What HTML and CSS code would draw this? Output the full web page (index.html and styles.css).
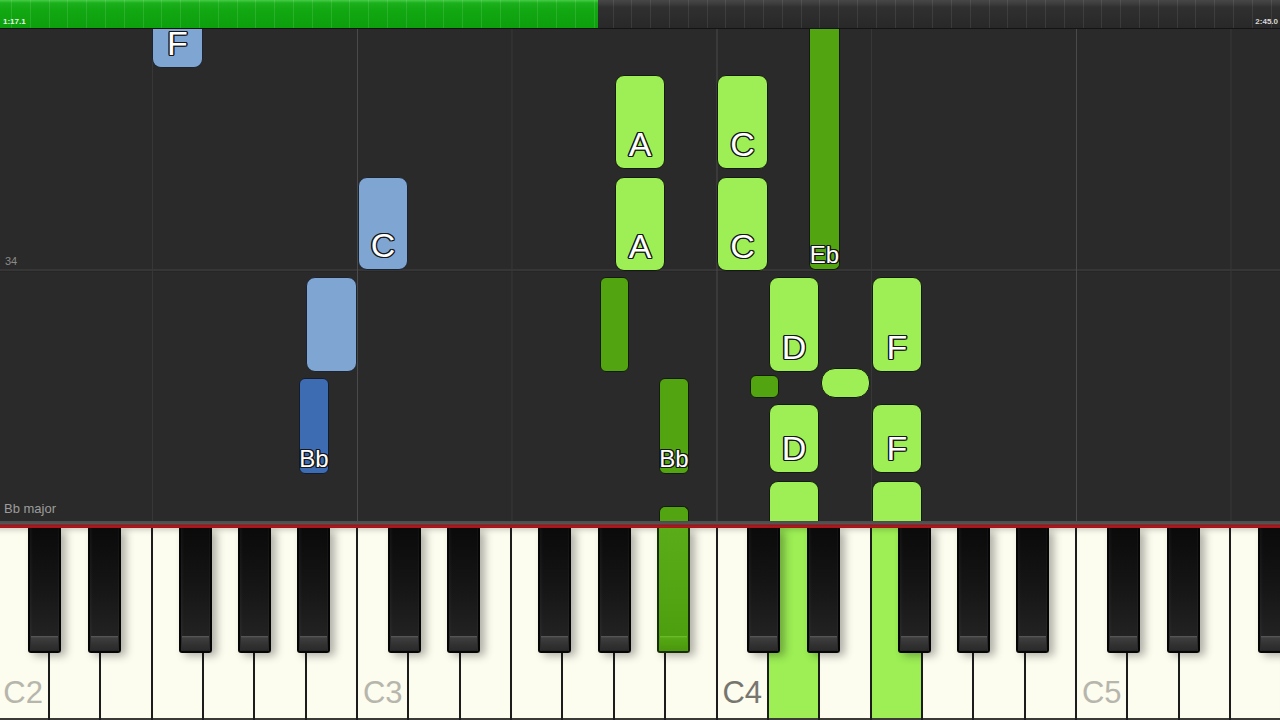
FILE: index.html
```html
<!DOCTYPE html>
<html>
<head>
<meta charset="utf-8">
<title>Piano roll</title>
<link rel="stylesheet" href="styles.css">
</head>
<body>
<div class="app">
  <div class="timebar">
    <div class="progress" style="width:598px"></div>
    <span class="time time-start">1:17.1</span>
    <span class="time time-end">2:45.0</span>
  </div>

  <div class="roll">
    <span class="measure">34</span>
    <span class="keysig">Bb major</span>

    <div class="note wide light-blue from-top" style="left:152px;top:0;width:51px;height:39px">F</div>
    <div class="note wide light-blue" style="left:358px;top:148px;width:50px;height:93px">C</div>
    <div class="note wide light-blue" style="left:306px;top:248px;width:51px;height:95px"></div>
    <div class="note narrow dark-blue" style="left:299px;top:349px;width:30px;height:96px">Bb</div>

    <div class="note wide light-green" style="left:615px;top:46px;width:50px;height:94px">A</div>
    <div class="note wide light-green" style="left:615px;top:148px;width:50px;height:94px">A</div>
    <div class="note wide light-green" style="left:717px;top:46px;width:51px;height:94px">C</div>
    <div class="note wide light-green" style="left:717px;top:148px;width:51px;height:94px">C</div>
    <div class="note narrow dark-green from-top" style="left:809px;top:0;width:31px;height:241px">Eb</div>

    <div class="note narrow dark-green" style="left:600px;top:248px;width:29px;height:95px"></div>
    <div class="note narrow dark-green" style="left:659px;top:349px;width:30px;height:96px">Bb</div>
    <div class="note narrow dark-green to-bottom" style="left:659px;top:477px;width:30px;height:15px"></div>

    <div class="note wide light-green" style="left:769px;top:248px;width:50px;height:95px">D</div>
    <div class="note narrow dark-green" style="left:750px;top:346px;width:29px;height:23px"></div>
    <div class="note wide light-green pill" style="left:821px;top:339px;width:49px;height:30px"></div>
    <div class="note wide light-green" style="left:769px;top:375px;width:50px;height:69px">D</div>
    <div class="note wide light-green to-bottom" style="left:769px;top:452px;width:50px;height:40px"></div>

    <div class="note wide light-green" style="left:872px;top:248px;width:50px;height:95px">F</div>
    <div class="note wide light-green" style="left:872px;top:375px;width:50px;height:69px">F</div>
    <div class="note wide light-green to-bottom" style="left:872px;top:452px;width:50px;height:40px"></div>
  </div>

  <div class="divider"></div>

  <div class="keyboard">
    <div class="keys">
      <!-- octave 2 -->
      <div class="white"><span class="lbl">C2</span><div class="black bk-c"></div></div>
      <div class="white"><div class="black bk-d"></div></div>
      <div class="white"></div>
      <div class="white"><div class="black bk-f"></div></div>
      <div class="white"><div class="black bk-g"></div></div>
      <div class="white"><div class="black bk-a"></div></div>
      <div class="white"></div>
      <!-- octave 3 -->
      <div class="white"><span class="lbl">C3</span><div class="black bk-c"></div></div>
      <div class="white"><div class="black bk-d"></div></div>
      <div class="white"></div>
      <div class="white"><div class="black bk-f"></div></div>
      <div class="white"><div class="black bk-g"></div></div>
      <div class="white"><div class="black bk-a lit"></div></div>
      <div class="white"></div>
      <!-- octave 4 -->
      <div class="white"><span class="lbl dark">C4</span><div class="black bk-c"></div></div>
      <div class="white lit"><div class="black bk-d"></div></div>
      <div class="white"></div>
      <div class="white lit"><div class="black bk-f"></div></div>
      <div class="white"><div class="black bk-g"></div></div>
      <div class="white"><div class="black bk-a"></div></div>
      <div class="white"></div>
      <!-- octave 5 -->
      <div class="white"><span class="lbl">C5</span><div class="black bk-c"></div></div>
      <div class="white"><div class="black bk-d"></div></div>
      <div class="white"></div>
      <div class="white"><div class="black bk-f"></div></div>
    </div>
  </div>
</div>
</body>
</html>
```

FILE: styles.css
```css
* {
  box-sizing: border-box;
  margin: 0;
  padding: 0;
}

html, body {
  width: 1280px;
  height: 720px;
  overflow: hidden;
  background: #2a2a2a;
  font-family: "Liberation Sans", Arial, sans-serif;
}

.app {
  display: flex;
  flex-direction: column;
  width: 1280px;
  height: 720px;
}

/* ---------- time bar ---------- */
.timebar {
  position: relative;
  flex: 0 0 29px;
  display: flex;
  border-bottom: 1px solid #141414;
  background-image:
    repeating-linear-gradient(90deg, transparent 0 11px, rgba(255,255,255,0.08) 11px 12px, transparent 12px 18.8px),
    linear-gradient(#474747 0, #3c3c3c 4px, #303030 7px, #282828 100%);
}

.progress {
  height: 100%;
  background-image:
    repeating-linear-gradient(90deg, transparent 0 11px, rgba(255,255,255,0.11) 11px 12px, transparent 12px 18.8px),
    linear-gradient(#48cc48 0, #1cb01c 3px, #12a812 10px, #0ca00c 100%);
}

.time {
  position: absolute;
  top: 17px;
  font-size: 8px;
  line-height: 9px;
  font-weight: bold;
  color: #e4f4e4;
}

.time-start { left: 3px; }
.time-end { right: 2px; color: #d8d8d8; }

/* ---------- roll ---------- */
.roll {
  position: relative;
  flex: 0 0 492px;
  overflow: hidden;
  background-color: #2a2a2a;
  background-image:
    linear-gradient(90deg, #4a4a4a 1px, transparent 1px),
    linear-gradient(90deg, #373737 1px, transparent 1px),
    linear-gradient(transparent 240px, #363636 240px, #363636 242px, #262626 242px, #262626 243px, transparent 243px);
  background-size: 359.5px 100%, 359.5px 100%, 100% 100%;
  background-position: 357px 0, 152px 0, 0 0;
  background-repeat: repeat-x, repeat-x, no-repeat;
}

.measure {
  position: absolute;
  left: 5px;
  top: 227px;
  font-size: 11px;
  line-height: 11px;
  color: #8a8a8a;
}

.keysig {
  position: absolute;
  left: 4px;
  top: 473px;
  font-size: 13px;
  line-height: 13px;
  color: #9c9c9c;
}

.note {
  position: absolute;
  display: flex;
  align-items: flex-end;
  justify-content: center;
  border: 1px solid #141a10;
  color: #ffffff;
  text-shadow:
    -1px -1px 0 #161616, 1px -1px 0 #161616,
    -1px 1px 0 #161616, 1px 1px 0 #161616,
    0 1.4px 0 #161616, 0 -1.4px 0 #161616,
    1.4px 0 0 #161616, -1.4px 0 0 #161616;
}

.note.wide {
  border-radius: 9px;
  font-size: 34px;
  line-height: 24px;
  padding-bottom: 12px;
}

.note.narrow {
  border-radius: 6px;
  font-size: 24px;
  line-height: 17px;
  padding-bottom: 6px;
}

.note.pill {
  border-radius: 14px;
}

/* notes that run past the top or bottom edge of the roll */
.note.from-top {
  border-top: none;
  border-top-left-radius: 0;
  border-top-right-radius: 0;
}

.note.to-bottom {
  border-bottom: none;
  border-bottom-left-radius: 0;
  border-bottom-right-radius: 0;
}

.light-blue { background: #7fa6d2; border-color: #1c2430; }
.dark-blue { background: #3d6cb3; border-color: #141c2a; }
.light-green { background: #9def55; }
.dark-green { background: #52a511; }

/* ---------- divider ---------- */
.divider {
  flex: 0 0 7px;
  background: linear-gradient(#4c4c4c 0, #555555 3px, #8a1418 4px, #b3161c 5px, #a41318 7px);
}

/* ---------- keyboard ---------- */
.keyboard {
  flex: 1 1 auto;
  overflow: hidden;
  position: relative;
}

.keys {
  display: flex;
  height: 100%;
  margin-left: -2.5px;
}

.white {
  position: relative;
  flex: 0 0 51.36px;
  height: 100%;
  display: flex;
  align-items: flex-end;
  justify-content: center;
  padding-bottom: 12px;
  background: #fcfcef;
  box-shadow:
    inset -1px 0 0 #1c1c1c,
    inset 1px 0 0 #1c1c1c,
    inset 0 -2px 0 #3a3a36,
    inset 0 6px 6px -5px rgba(0,0,0,0.25);
}

.white.lit {
  background: #9def55;
}

.lbl {
  font-size: 31px;
  line-height: 1;
  color: #b6b6ac;
}

.lbl.dark {
  color: #76766e;
}

.black {
  position: absolute;
  top: 0;
  z-index: 2;
  width: 33px;
  height: 125px;
  border: 2px solid #050505;
  border-top: none;
  border-radius: 0 0 3px 3px;
  background: linear-gradient(90deg, rgba(255,255,255,0.04) 0, transparent 3px, transparent 28px, rgba(255,255,255,0.05) 29px),
              linear-gradient(#0a0a0a 0, #161616 50%, #262626 100%);
  box-shadow: 5px 3px 8px rgba(0,0,0,0.3);
}

.black::after {
  content: "";
  position: absolute;
  left: 1px;
  right: 1px;
  bottom: 1px;
  height: 14px;
  border-radius: 0 0 2px 2px;
  background: linear-gradient(#5c5c5c 0, #3e3e3e 2px, #323232 60%, #2a2a2a 100%);
}

.black.lit {
  border-color: #1a2c08;
  background: linear-gradient(#5aac18 0, #52a412 60%, #4c9c0e 100%);
}

.black.lit::after {
  background: linear-gradient(#72c030 0, #56a814 2px, #4a980e 100%);
}

.bk-c { left: 30.5px; }
.bk-d { left: 39.1px; }
.bk-f { left: 27.4px; }
.bk-g { left: 35.1px; }
.bk-a { left: 42.7px; }
```
